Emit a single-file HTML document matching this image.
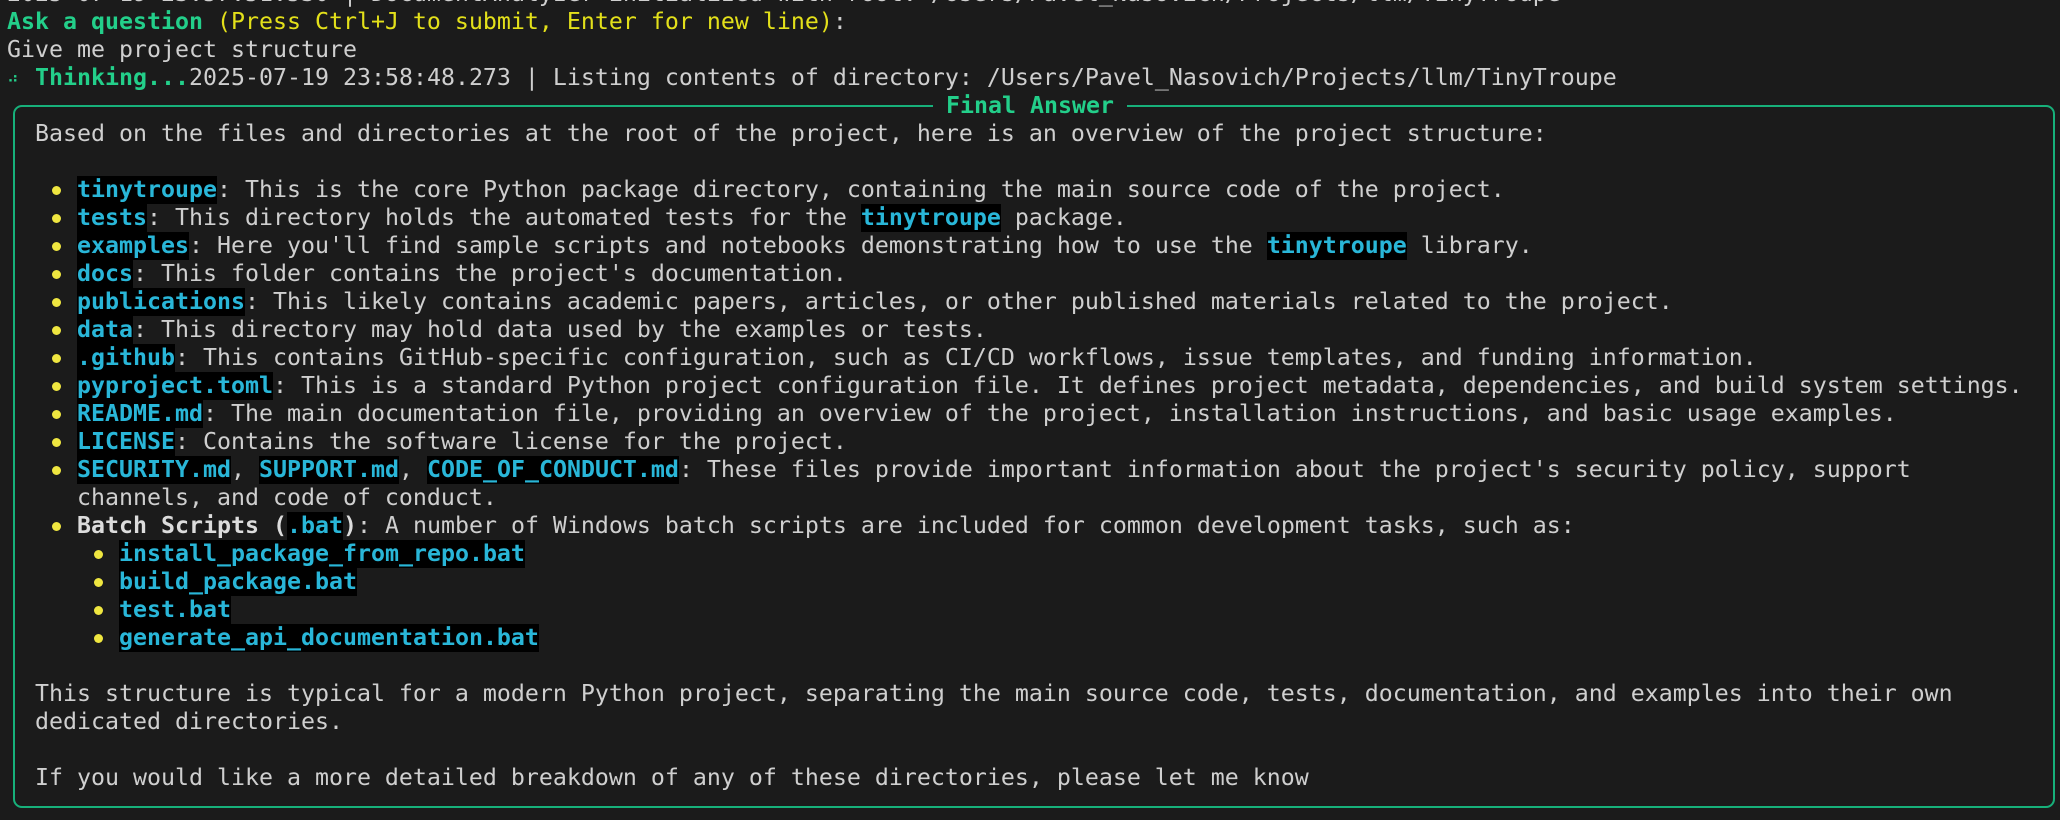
<!DOCTYPE html>
<html><head><meta charset="utf-8"><style>
html,body{margin:0;padding:0;background:#1b1b1b;width:2060px;height:820px;overflow:hidden}
.r{position:absolute;left:7px;height:28px;line-height:28px;white-space:pre;font-family:"DejaVu Sans Mono","Liberation Mono",monospace;font-size:23.25px;color:#cfcfcf}
.g{color:#23cf8a;font-weight:bold}
.y{color:#e3e01a}
.b{font-weight:bold;color:#dcdcdc}
.c{color:#29b6d8;font-weight:bold;background:#000;display:inline-block;height:28px;vertical-align:top}
.d{display:inline-block;width:14px;height:28px;vertical-align:top;position:relative}
.d:after{content:"";position:absolute;left:3px;top:10px;width:9px;height:9px;border-radius:50%;background:#efe640}
.sp{display:inline-block;width:14px;overflow:hidden;vertical-align:top;color:#23cf8a;font-size:16px}
.box{position:absolute;left:13px;top:105px;width:2038px;height:699px;border:2px solid #17b07a;border-radius:9px}
.t{position:absolute;left:933px;top:92px;height:28px;line-height:28px;padding:0 13px;background:#1b1b1b;font-family:"DejaVu Sans Mono","Liberation Mono",monospace;font-size:23.25px;color:#23cf8a;font-weight:bold;white-space:pre}
</style></head><body>
<div class="box"></div>
<div class="t">Final Answer</div>
<div class="r" style="top:-20px">2025-07-19 23:57:51.530 | DocumentAnalyzer initialized with root: /Users/Pavel_Nasovich/Projects/llm/TinyTroupe</div>
<div class="r" style="top:8px"><span class="g">Ask a question</span> <span class="y">(Press Ctrl+J to submit, Enter for new line)</span>:</div>
<div class="r" style="top:36px">Give me project structure</div>
<div class="r" style="top:64px"><span class="sp">⠴</span><span class="g"> Thinking...</span>2025-07-19 23:58:48.273 | Listing contents of directory: /Users/Pavel_Nasovich/Projects/llm/TinyTroupe</div>
<div class="r" style="top:120px">  Based on the files and directories at the root of the project, here is an overview of the project structure:</div>
<div class="r" style="top:176px">   <span class="d"></span> <span class="c">tinytroupe</span>: This is the core Python package directory, containing the main source code of the project.</div>
<div class="r" style="top:204px">   <span class="d"></span> <span class="c">tests</span>: This directory holds the automated tests for the <span class="c">tinytroupe</span> package.</div>
<div class="r" style="top:232px">   <span class="d"></span> <span class="c">examples</span>: Here you'll find sample scripts and notebooks demonstrating how to use the <span class="c">tinytroupe</span> library.</div>
<div class="r" style="top:260px">   <span class="d"></span> <span class="c">docs</span>: This folder contains the project's documentation.</div>
<div class="r" style="top:288px">   <span class="d"></span> <span class="c">publications</span>: This likely contains academic papers, articles, or other published materials related to the project.</div>
<div class="r" style="top:316px">   <span class="d"></span> <span class="c">data</span>: This directory may hold data used by the examples or tests.</div>
<div class="r" style="top:344px">   <span class="d"></span> <span class="c">.github</span>: This contains GitHub-specific configuration, such as CI/CD workflows, issue templates, and funding information.</div>
<div class="r" style="top:372px">   <span class="d"></span> <span class="c">pyproject.toml</span>: This is a standard Python project configuration file. It defines project metadata, dependencies, and build system settings.</div>
<div class="r" style="top:400px">   <span class="d"></span> <span class="c">README.md</span>: The main documentation file, providing an overview of the project, installation instructions, and basic usage examples.</div>
<div class="r" style="top:428px">   <span class="d"></span> <span class="c">LICENSE</span>: Contains the software license for the project.</div>
<div class="r" style="top:456px">   <span class="d"></span> <span class="c">SECURITY.md</span>, <span class="c">SUPPORT.md</span>, <span class="c">CODE_OF_CONDUCT.md</span>: These files provide important information about the project's security policy, support</div>
<div class="r" style="top:484px">     channels, and code of conduct.</div>
<div class="r" style="top:512px">   <span class="d"></span> <span class="b">Batch Scripts (</span><span class="c">.bat</span><span class="b">)</span>: A number of Windows batch scripts are included for common development tasks, such as:</div>
<div class="r" style="top:540px">      <span class="d"></span> <span class="c">install_package_from_repo.bat</span></div>
<div class="r" style="top:568px">      <span class="d"></span> <span class="c">build_package.bat</span></div>
<div class="r" style="top:596px">      <span class="d"></span> <span class="c">test.bat</span></div>
<div class="r" style="top:624px">      <span class="d"></span> <span class="c">generate_api_documentation.bat</span></div>
<div class="r" style="top:680px">  This structure is typical for a modern Python project, separating the main source code, tests, documentation, and examples into their own</div>
<div class="r" style="top:708px">  dedicated directories.</div>
<div class="r" style="top:764px">  If you would like a more detailed breakdown of any of these directories, please let me know</div>
</body></html>
